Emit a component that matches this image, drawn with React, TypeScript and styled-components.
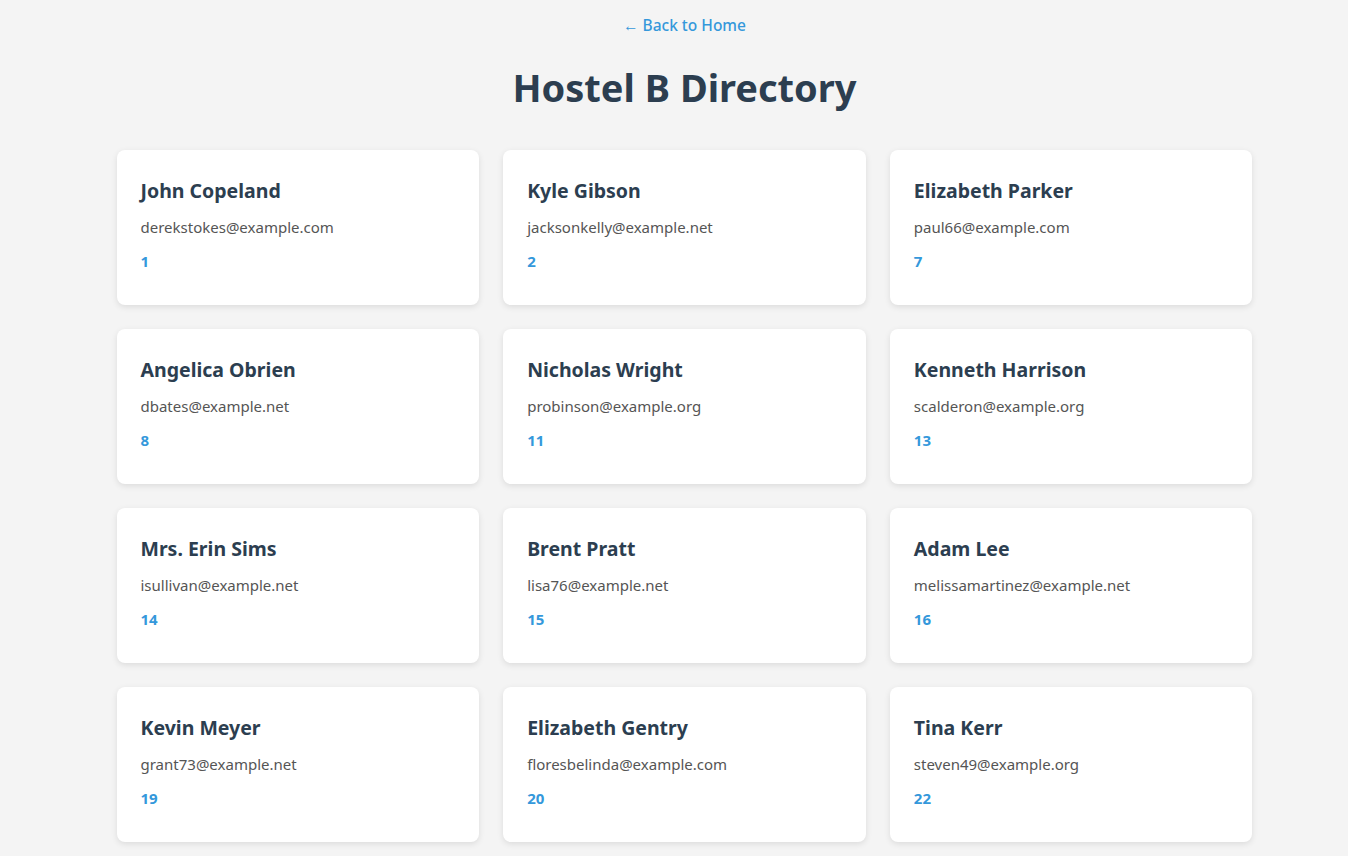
import React from "react";
import styled, { createGlobalStyle } from "styled-components";

const GlobalStyle = createGlobalStyle`
  * { box-sizing: border-box; }
  body {
    margin: 0;
    padding-left: 21px;
    background: #f4f4f4;
    font-family: "Noto Sans", "Open Sans", sans-serif;
    color: #2c3e50;
  }
`;

const Page = styled.div`
  max-width: 1200px;
  margin: 0 auto;
  padding: 15px 32px 14px;
`;

const Header = styled.header`
  display: flex;
  flex-direction: column;
  align-items: center;
`;

const BackLink = styled.a`
  display: block;
  color: #3498db;
  font-size: 15.5px;
  font-weight: 500;
  line-height: 20px;
  text-decoration: none;
`;

const Title = styled.h1`
  margin: 29px 0 40px;
  font-size: 38px;
  line-height: 46px;
  font-weight: 700;
  color: #2c3e50;
`;

const Grid = styled.div`
  display: grid;
  grid-template-columns: repeat(3, 1fr);
  gap: 24px;
`;

const Card = styled.div`
  background: #fff;
  border-radius: 8px;
  box-shadow: 0 2px 6px rgba(0, 0, 0, 0.1);
  padding: 24px;
`;

const Name = styled.h3`
  margin: 4px 0 0;
  font-size: 19.5px;
  line-height: 26px;
  font-weight: 700;
  color: #2c3e50;
`;

const Email = styled.p`
  margin: 12px 0 13px;
  font-size: 15px;
  line-height: 22px;
  color: #555;
`;

const Room = styled.p`
  margin: 0 0 10px;
  font-size: 15px;
  line-height: 20px;
  font-weight: 700;
  color: #3498db;
`;

const people = [
  ["John Copeland", "derekstokes@example.com", "1"],
  ["Kyle Gibson", "jacksonkelly@example.net", "2"],
  ["Elizabeth Parker", "paul66@example.com", "7"],
  ["Angelica Obrien", "dbates@example.net", "8"],
  ["Nicholas Wright", "probinson@example.org", "11"],
  ["Kenneth Harrison", "scalderon@example.org", "13"],
  ["Mrs. Erin Sims", "isullivan@example.net", "14"],
  ["Brent Pratt", "lisa76@example.net", "15"],
  ["Adam Lee", "melissamartinez@example.net", "16"],
  ["Kevin Meyer", "grant73@example.net", "19"],
  ["Elizabeth Gentry", "floresbelinda@example.com", "20"],
  ["Tina Kerr", "steven49@example.org", "22"],
];

export default function App() {
  return (
    <>
      <GlobalStyle />
      <Page>
        <Header>
          <BackLink href="#">← Back to Home</BackLink>
          <Title>Hostel B Directory</Title>
        </Header>
        <Grid>
          {people.map(([name, email, room]) => (
            <Card key={name}>
              <Name>{name}</Name>
              <Email>{email}</Email>
              <Room>{room}</Room>
            </Card>
          ))}
        </Grid>
      </Page>
    </>
  );
}
